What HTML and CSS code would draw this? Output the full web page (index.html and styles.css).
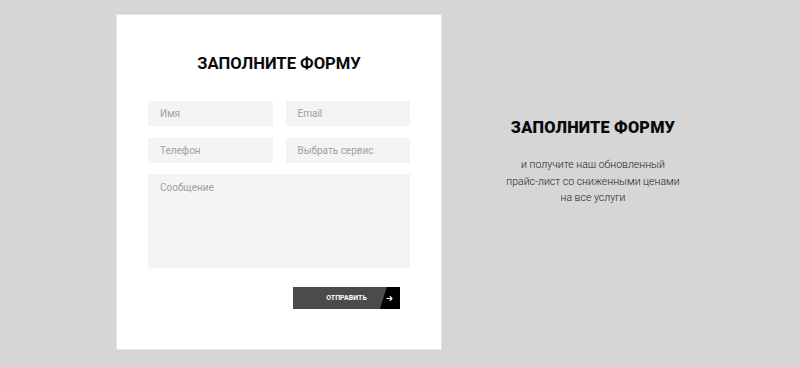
FILE: index.html
```html
<!DOCTYPE html>
<html lang="ru">
<head>
<meta charset="utf-8">
<link rel="stylesheet" href="styles.css">
</head>
<body>
<div class="page">
  <div class="card">
    <h1 class="card-title">ЗАПОЛНИТЕ ФОРМУ</h1>
    <form class="form">
      <div class="row">
        <div class="field">Имя</div>
        <div class="field">Email</div>
      </div>
      <div class="row">
        <div class="field">Телефон</div>
        <div class="field">Выбрать сервис</div>
      </div>
      <div class="field area">Сообщение</div>
      <div class="actions">
        <div class="btn">
          <span class="btn-label">ОТПРАВИТЬ</span>
          <span class="btn-icon"><svg width="7" height="7" viewBox="0 0 7 7"><path d="M0.5 3.5H6M3.8 1.2L6 3.5L3.8 5.8" fill="none" stroke="#fff" stroke-width="1.1"/></svg></span>
        </div>
      </div>
    </form>
  </div>
  <div class="info">
    <h2 class="info-title">ЗАПОЛНИТЕ ФОРМУ</h2>
    <p class="info-text">и получите наш обновленный<br>прайс-лист со сниженными ценами<br>на все услуги</p>
  </div>
</div>
</body>
</html>
```
FILE: styles.css
```css
* { box-sizing: border-box; }
html, body { margin: 0; padding: 0; }
body {
  background: #d6d6d6;
  font-family: Roboto, "Liberation Sans", sans-serif;
  width: 800px;
  height: 367px;
  overflow: hidden;
}
.page {
  display: flex;
  padding: 14px 0 0 116px;
}
.card {
  width: 326px;
  height: 336px;
  background: #fff;
  border: 1px solid #e6e6e6;
  padding: 0 31px;
}
.card-title {
  margin: 39px 0 0;
  font-size: 16.6px;
  font-weight: 700;
  line-height: 20px;
  text-align: center;
  color: #0a0a0a;
}
.form {
  margin-top: 27px;
  display: flex;
  flex-direction: column;
  gap: 11px;
}
.row {
  display: flex;
  gap: 13px;
}
.row + .row { margin-top: 1px; }
.field {
  flex: 1;
  height: 25px;
  background: #f4f4f4;
  color: #a0a0a0;
  font-size: 10px;
  line-height: 25px;
  padding-left: 12px;
}
.area {
  flex: none;
  height: 94px;
  line-height: 12px;
  padding-top: 8px;
}
.actions {
  display: flex;
  justify-content: flex-end;
  padding-right: 10px;
  margin-top: 8px;
}
.btn {
  position: relative;
  width: 107px;
  height: 22px;
  background: #4b4b4b;
  overflow: hidden;
  display: flex;
  align-items: center;
}
.btn::after {
  content: "";
  position: absolute;
  top: 0;
  bottom: 0;
  left: 87px;
  width: 30px;
  background: #000;
  transform: skewX(-17deg);
  transform-origin: bottom left;
}
.btn-label {
  flex: 1;
  text-align: center;
  color: #fff;
  font-size: 7px;
  font-weight: 700;
  padding-left: 22px;
}
.btn-icon {
  position: relative;
  z-index: 1;
  width: 22px;
  display: flex;
  justify-content: center;
  padding-left: 1px;
}
.info {
  margin-left: 41px;
  width: 220px;
  padding-top: 104px;
  text-align: center;
}
.info-title {
  margin: 0;
  font-size: 16.3px;
  font-weight: 900;
  line-height: 20px;
  color: #0a0a0a;
  letter-spacing: 0.2px;
}
.info-text {
  margin: 19px 0 0;
  font-size: 10.5px;
  font-weight: 300;
  line-height: 16.5px;
  color: #222;
}
```
